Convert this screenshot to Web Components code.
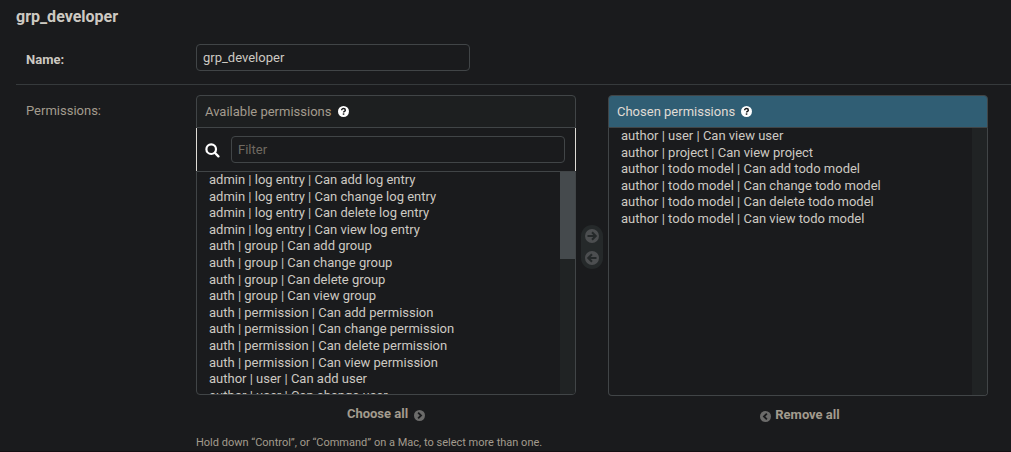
<!DOCTYPE html>
<html lang="en">
<head>
<meta charset="utf-8">
<title>grp_developer</title>
<style>
  :root {
    --bg: #1a1b1d;
    --line: #414547;
    --text: #cdc9c2;
    --muted: #a39b8e;
  }
  html { background: var(--bg); }
  body {
    margin: 0;
    background: var(--bg);
    color: var(--text);
    font: 13px/16px Roboto, "Liberation Sans", sans-serif;
    overflow: hidden;
  }
</style>
</head>
<body>
<group-form></group-form>

<template id="t-form">
  <style>
    :host { display: block; padding: 8px 0 0 16px; border-bottom: 2px solid #150f13; }
    h1 { margin: 0; font-size: 16px; line-height: 18px; font-weight: 700; }
  </style>
  <h1>grp_developer</h1>
  <name-row></name-row>
  <permissions-row></permissions-row>
</template>

<template id="t-name">
  <style>
    :host {
      display: flex; align-items: center; box-sizing: border-box;
      padding: 18px 10px 13px; border-bottom: 1px solid #363a3c;
    }
    label { flex: 0 0 170px; font-weight: 700; padding-top: 4px; }
    input {
      box-sizing: border-box; width: 274px; height: 27px; margin: 0; padding: 5px 6px;
      border: 1px solid var(--line); border-radius: 4px; background: transparent;
      color: var(--text); font: inherit; outline: none;
    }
  </style>
  <label for="name">Name:</label>
  <input id="name" type="text" value="grp_developer">
</template>

<template id="t-perms">
  <style>
    :host { display: flex; padding: 10px 10px 0; }
    .label { flex: 0 0 170px; color: var(--muted); padding-top: 8px; }
    .field { flex: 1; min-width: 0; max-width: 792px; }
    .selector { display: flex; }
    .column { flex: 0 0 380px; }
    move-buttons { flex: 0 0 32px; }
    p { margin: 12px 0 0; font-size: 11px; line-height: 16px; color: var(--muted); }
  </style>
  <span class="label">Permissions:</span>
  <div class="field">
    <div class="selector">
      <permission-list class="column" kind="available"></permission-list>
      <move-buttons></move-buttons>
      <permission-list class="column" kind="chosen"></permission-list>
    </div>
    <p>Hold down “Control”, or “Command” on a Mac, to select more than one.</p>
  </div>
</template>

<template id="t-list">
  <style>
    :host { display: flex; flex-direction: column; align-items: center; }
    h2 {
      box-sizing: border-box; width: 100%; margin: 0; padding: 8px;
      display: flex; align-items: center; gap: 7px;
      border: 1px solid var(--line);
      border-radius: 4px 4px 0 0; background: #1d1f20; color: var(--muted);
      font-size: 13px; line-height: 15px; font-weight: 400;
    }
    :host([kind="chosen"]) h2 { background: #305e74; color: #e0dcd5; gap: 6px; }
    .filter {
      box-sizing: border-box; width: 100%; padding: 8px 10px 8px 8px;
      display: flex; align-items: center; gap: 11px;
      border: solid #dedbd6; border-width: 0 1px;
    }
    .filter svg { margin-top: 2px; }
    input {
      box-sizing: border-box; flex: 1; min-width: 0; height: 27px; margin: 0; padding: 5px 6px;
      border: 1px solid var(--line); border-radius: 4px; background: transparent;
      color: var(--text); font: inherit; outline: none;
    }
    input::placeholder { color: #706a61; }
    .frame {
      box-sizing: border-box; width: 100%; height: 268px; display: flex; overflow: hidden;
      border: 1px solid var(--line); border-top: 0; border-radius: 0 0 4px 4px;
    }
    :host([kind="available"]) .frame { height: 224px; border-top: 1px solid var(--line); }
    select {
      flex: 1; min-width: 0; height: 100%; margin: 0; padding: 0 0 0 10px;
      border: 0; border-radius: 0; background: transparent;
      color: var(--text); font: inherit; outline: none;
      overflow-y: scroll; scrollbar-width: none;
    }
    .track { flex: 0 0 15px; background: #202324; }
    .thumb { height: 87px; background: #454a4d; }
    button {
      margin: 11px 0 0; padding: 0; border: 0; background: none; color: var(--muted);
      display: flex; align-items: center; gap: 6px; font: 700 13px/16px Roboto, sans-serif;
    }
    :host([kind="chosen"]) button { gap: 4px; padding-left: 4px; }
    button svg { margin-top: 2px; }
  </style>
  <h2><span></span>
    <svg width="11" height="11" viewBox="0 0 12 12" role="img" aria-label="Help"><circle cx="6" cy="6" r="6" fill="#fff"/><path d="M4 4.7C4 3.4 4.9 2.8 6 2.8s2 .7 2 1.7c0 1.3-1.9 1.3-1.9 2.6" fill="none" stroke="#1a1b1d" stroke-width="1.6"/><rect x="5.2" y="8" width="1.7" height="1.6" fill="#1a1b1d"/></svg>
  </h2>
  <div class="filter">
    <svg width="15" height="15" viewBox="0 0 15 15" aria-hidden="true"><circle cx="6.2" cy="6.2" r="4.8" fill="none" stroke="#fff" stroke-width="2.2"/><path d="M9.8 9.8l3.6 3.6" stroke="#fff" stroke-width="2.3" stroke-linecap="round"/></svg>
    <input type="text" placeholder="Filter" aria-label="Filter available permissions">
  </div>
  <div class="frame">
    <select multiple></select>
    <div class="track" aria-hidden="true"><div class="thumb"></div></div>
  </div>
  <button type="button"></button>
</template>

<template id="t-move">
  <style>
    :host { display: flex; flex-direction: column; align-items: center; padding-top: 130px; }
    div {
      display: flex; flex-direction: column; gap: 8px; padding: 4px;
      background: #25292a; border-radius: 11px;
    }
    button { display: block; margin: 0; padding: 0; border: 0; background: none; width: 14px; height: 14px; }
    svg { display: block; }
  </style>
  <div>
    <button type="button" aria-label="Choose"><svg width="14" height="14" viewBox="0 0 14 14"><circle cx="7" cy="7" r="7" fill="#4c4e50"/><path d="M2.5 7h8M7 3.2L10.8 7 7 10.8" fill="none" stroke="#25292a" stroke-width="2"/></svg></button>
    <button type="button" aria-label="Remove"><svg width="14" height="14" viewBox="0 0 14 14"><circle cx="7" cy="7" r="7" fill="#4c4e50"/><path d="M11.5 7h-8M7 3.2L3.2 7 7 10.8" fill="none" stroke="#25292a" stroke-width="2"/></svg></button>
  </div>
</template>

<script>
  const stamp = (host, id) => {
    const root = host.attachShadow({ mode: "open" });
    root.append(document.getElementById(id).content.cloneNode(true));
    return root;
  };

  const actions = (app, model) =>
    ["add", "change", "delete", "view"].map(a => `${app} | ${model} | Can ${a} ${model}`);

  const PERMISSIONS = {
    available: [
      ...actions("admin", "log entry"),
      ...actions("auth", "group"),
      ...actions("auth", "permission"),
      ...actions("author", "user").slice(0, 3),
      ...actions("author", "project").slice(0, 3),
      ...actions("authtoken", "token"),
      ...actions("authtoken", "Token"),
      ...actions("contenttypes", "content type"),
      ...actions("sessions", "session"),
    ],
    chosen: [
      "author | user | Can view user",
      "author | project | Can view project",
      ...actions("author", "todo model"),
    ],
  };

  const chevron = d =>
    `<svg width="11" height="11" viewBox="0 0 12 12" aria-hidden="true"><circle cx="6" cy="6" r="6" fill="#6b6b6a"/><path d="${d}" fill="none" stroke="#1a1b1d" stroke-width="2"/></svg>`;

  customElements.define("permission-list", class extends HTMLElement {
    constructor() {
      super();
      const root = stamp(this, "t-list");
      const kind = this.getAttribute("kind");
      const chosen = kind === "chosen";
      const title = chosen ? "Chosen permissions" : "Available permissions";
      root.querySelector("h2 span").textContent = title;
      if (chosen) {
        root.querySelector(".filter").remove();
        root.querySelector(".thumb").remove();
      }
      const select = root.querySelector("select");
      select.setAttribute("aria-label", title);
      for (const text of PERMISSIONS[kind]) select.add(new Option(text));
      root.querySelector("button").innerHTML = chosen
        ? chevron("M7.5 2.8L4.3 6l3.2 3.2") + "<span>Remove all</span>"
        : "<span>Choose all</span>" + chevron("M4.5 2.8L7.7 6 4.5 9.2");
    }
  });

  for (const [tag, id] of [["move-buttons", "t-move"], ["permissions-row", "t-perms"], ["name-row", "t-name"], ["group-form", "t-form"]]) {
    customElements.define(tag, class extends HTMLElement {
      constructor() { super(); stamp(this, id); }
    });
  }
</script>
</body>
</html>
